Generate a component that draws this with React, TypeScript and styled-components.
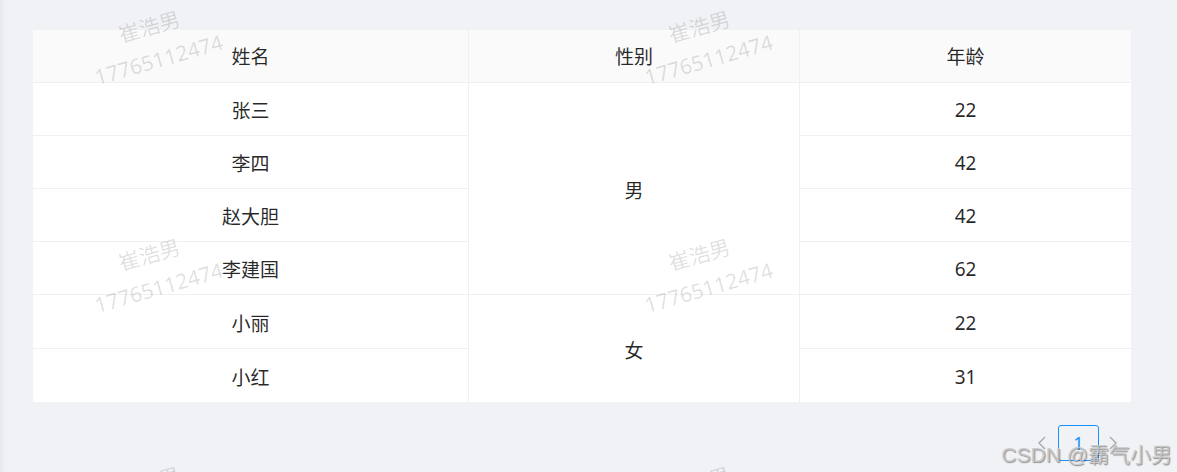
import styled, {createGlobalStyle} from 'styled-components';

const GlobalStyle = createGlobalStyle`
	body {
		margin: 0;
		background: #f0f2f5;
		font-family: "Noto Sans", "Noto Sans CJK SC", sans-serif;
	}
`;

const Page = styled.div`
	position: relative;
	height: 100vh;
	box-sizing: border-box;
	padding: 30px 46px 0 33px;
	overflow: hidden;
	background: linear-gradient(to right, #e7e9ee 0, #f0f2f5 6px);
`;

const Table = styled.table`
	width: 100%;
	table-layout: fixed;
	border-collapse: separate;
	border-spacing: 0;
	background: #fff;
	font-size: 19px;
	color: rgba(0, 0, 0, 0.85);
`;

const Row = styled.tr<{$h?: number}>`
	height: ${({$h}) => $h ?? 53}px;
`;

const HeadCell = styled.th<{$last?: boolean}>`
	padding: 0;
	font-weight: 400;
	text-align: center;
	background: #fafafa;
	border-bottom: 1px solid #f0f0f0;
	border-right: ${({$last}) => ($last ? 'none' : '1px solid #f0f0f0')};
`;

const Cell = styled.td<{$last?: boolean; $bottom?: boolean}>`
	padding: 2px 0 0;
	text-align: center;
	border-bottom: ${({$bottom}) => ($bottom ? 'none' : '1px solid #f0f0f0')};
	border-right: ${({$last}) => ($last ? 'none' : '1px solid #f0f0f0')};
`;

const Pager = styled.ul`
	display: flex;
	justify-content: flex-end;
	list-style: none;
	margin: 23px 4px 0 0;
	padding: 0;
`;

const NavItem = styled.li<{$w: number}>`
	width: ${({$w}) => $w}px;
	height: 36px;
	display: flex;
	align-items: center;
	justify-content: center;
	color: rgba(0, 0, 0, 0.3);
`;

const PageItem = styled.li`
	width: 41px;
	height: 36px;
	box-sizing: border-box;
	border: 1px solid #1890ff;
	border-radius: 3px;
	display: flex;
	align-items: center;
	justify-content: center;
	font-size: 18px;
	color: #1890ff;
`;

const WatermarkLayer = styled.div`
	position: absolute;
	inset: 0;
	z-index: 2;
	pointer-events: none;
	display: grid;
	grid-template-columns: repeat(3, 550px);
	grid-auto-rows: 228px;
`;

const Mark = styled.div`
	width: 150px;
	margin: 9px 0 0 79px;
	transform: rotate(-16deg);
	text-align: center;
	font-size: 21px;
	line-height: 34px;
	white-space: nowrap;
	color: rgba(0, 0, 0, 0.13);
`;

const SiteMark = styled.div`
	position: absolute;
	right: 5px;
	bottom: 4px;
	z-index: 3;
	font-family: "Liberation Sans", "Noto Sans CJK SC", sans-serif;
	font-size: 21px;
	color: rgba(200, 200, 200, 0.85);
	text-shadow: 1px 1px 1px rgba(0, 0, 0, 0.4);
	pointer-events: none;
`;

const people = [
	{name: '张三', age: 22},
	{name: '李四', age: 42},
	{name: '赵大胆', age: 42},
	{name: '李建国', age: 62},
	{name: '小丽', age: 22},
	{name: '小红', age: 31},
];

// 性别列合并: index -> [文字, 跨行数]
const genderSpans: Record<number, [string, number]> = {
	0: ['男', 4],
	4: ['女', 2],
};

function Chevron({dir}: {dir: 'left' | 'right'}) {
	return (
		<svg width='10' height='14' viewBox='0 0 10 14'>
			<polyline
				points={dir === 'left' ? '8,1 2,7 8,13' : '2,1 8,7 2,13'}
				fill='none'
				stroke='currentColor'
				strokeWidth='1.4'
			/>
		</svg>
	);
}

function App() {
	return (
		<Page>
			<GlobalStyle />
			<Table>
				<colgroup>
					<col style={{width: '436px'}} />
					<col style={{width: '331px'}} />
					<col />
				</colgroup>
				<thead>
					<Row>
						<HeadCell>姓名</HeadCell>
						<HeadCell>性别</HeadCell>
						<HeadCell $last>年龄</HeadCell>
					</Row>
				</thead>
				<tbody>
					{people.map((p, i) => {
						const last = i === people.length - 1;
						const span = genderSpans[i];
						return (
							<Row key={p.name} $h={i === 4 ? 54 : 53}>
								<Cell $bottom={last}>{p.name}</Cell>
								{span && (
									<Cell rowSpan={span[1]} $bottom={i + span[1] === people.length}>
										{span[0]}
									</Cell>
								)}
								<Cell $last $bottom={last}>
									{p.age}
								</Cell>
							</Row>
						);
					})}
				</tbody>
			</Table>
			<Pager>
				<NavItem $w={32}>
					<Chevron dir='left' />
				</NavItem>
				<PageItem>1</PageItem>
				<NavItem $w={28}>
					<Chevron dir='right' />
				</NavItem>
			</Pager>
			<WatermarkLayer>
				{Array.from({length: 9}).map((_, i) => (
					<div key={i}>
						<Mark>
							崔浩男
							<br />
							17765112474
						</Mark>
					</div>
				))}
			</WatermarkLayer>
			<SiteMark>CSDN @霸气小男</SiteMark>
		</Page>
	);
}
export default App;
